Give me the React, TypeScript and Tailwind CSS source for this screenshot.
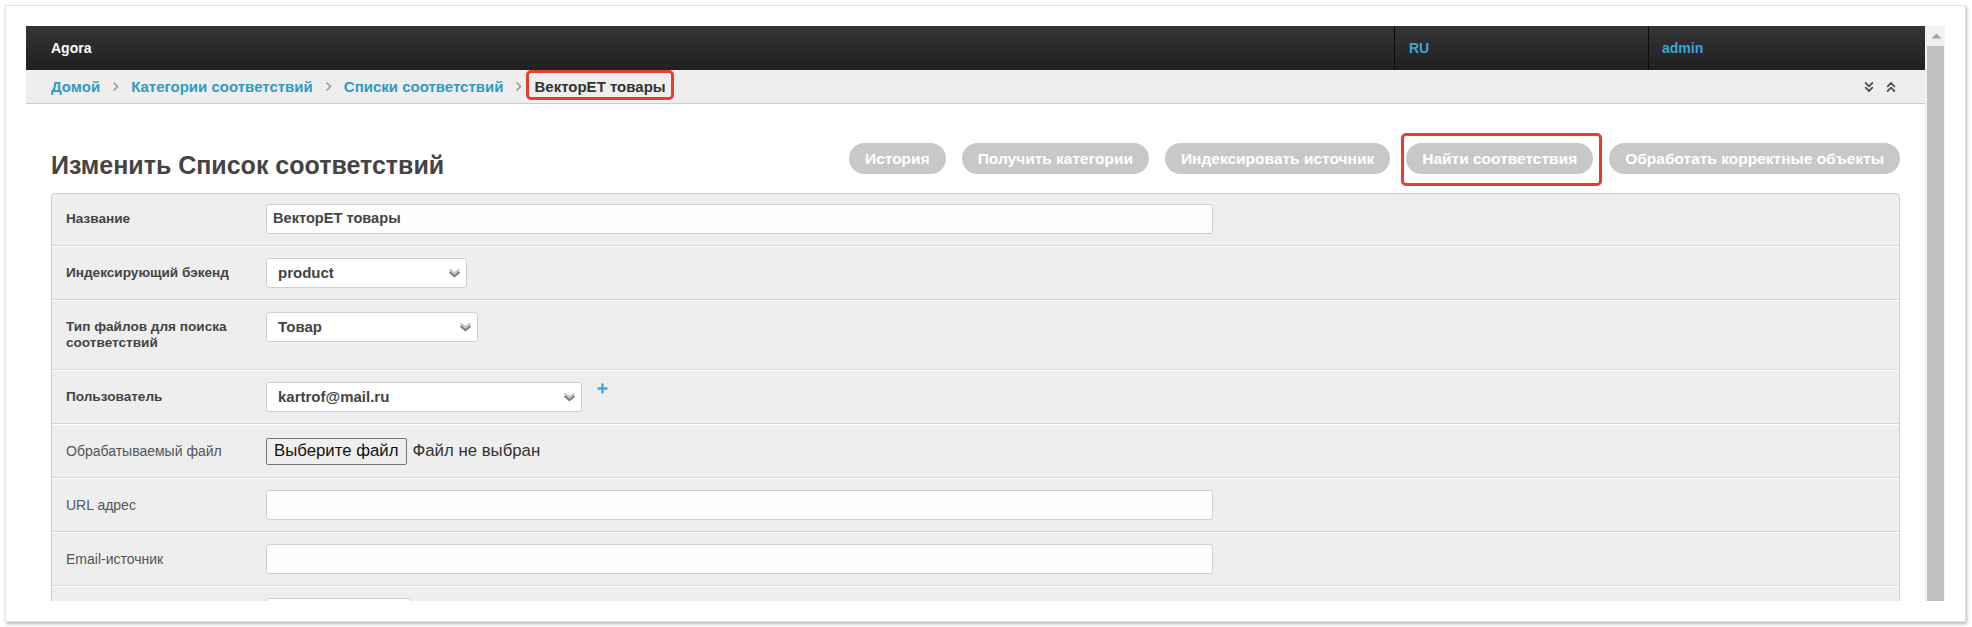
import React from "react";
import { ChevronsDown, ChevronsUp } from "lucide-react";

function Crumb({ children }: { children: React.ReactNode }) {
  return <span className="text-[#309bbf]">{children}</span>;
}

function Sep() {
  return (
    <svg width="7" height="11" viewBox="0 0 7 11" className="mx-[12px]">
      <path d="M1.5 1.5 L5.5 5.5 L1.5 9.5" fill="none" stroke="#9a9a9a" strokeWidth="1.6" />
    </svg>
  );
}

function SelectArrow() {
  return (
    <svg width="15" height="10" viewBox="0 0 15 10">
      <path d="M2.5 1.5 L7.5 5 L12.5 1.5" fill="none" stroke="#c4c4c4" strokeWidth="2" />
      <path d="M2.5 4 L7.5 8 L12.5 4" fill="none" stroke="#7d7d7d" strokeWidth="2.2" />
    </svg>
  );
}

function Select({ value, width }: { value: string; width: string }) {
  return (
    <div
      className={`${width} h-[30px] flex items-center justify-between border border-[#cfcfcf] rounded-[3px] bg-white pl-[11px] pr-[4px] text-[15px] font-bold text-[#444]`}
    >
      <span>{value}</span>
      <SelectArrow />
    </div>
  );
}

function TextInput({ value, width = "w-[947px]" }: { value?: string; width?: string }) {
  return (
    <div
      className={`${width} h-[30px] flex items-center border border-[#cfcfcf] rounded-[3px] bg-[#fdfdfd] pl-[6px] text-[14.6px] font-bold text-[#444]`}
    >
      {value}
    </div>
  );
}

function Row({
  label,
  bold = true,
  first = false,
  children,
}: {
  label: React.ReactNode;
  bold?: boolean;
  first?: boolean;
  children: React.ReactNode;
}) {
  return (
    <div
      className={`flex border-b border-b-[#d6d6d6] ${
        first ? "pt-[10px]" : "border-t border-t-white pt-[11px]"
      } pb-[11px]`}
    >
      <div className="w-[214px] shrink-0 pl-[14px] pr-[24px]">
        <div
          className={`py-[7px] leading-[16px] ${
            bold ? "text-[13.6px] font-bold text-[#444]" : "text-[14px] font-normal text-[#555]"
          }`}
        >
          {label}
        </div>
      </div>
      <div className="flex items-start">{children}</div>
    </div>
  );
}

function ToolButton({ children, marked = false }: { children: React.ReactNode; marked?: boolean }) {
  return (
    <div className="relative">
      <div className="h-[31px] leading-[31px] rounded-full bg-[#c8c8c8] px-[16px] text-[15.5px] font-bold text-white whitespace-nowrap">
        {children}
      </div>
      {marked && (
        <div className="absolute left-[-5px] right-[-9px] top-[-10px] bottom-[-12px] border-[3px] border-[#e53e30] rounded-[5px]" />
      )}
    </div>
  );
}

export default function App() {
  return (
    <div className="w-[1972px] h-[627px] bg-white pl-[5px] pt-[5px] overflow-hidden font-['Liberation_Sans',Arial,sans-serif]">
      <div className="w-[1961px] h-[617px] bg-white border border-[#e2e2e2] shadow-[1px_2px_3px_rgba(0,0,0,0.28)] p-[20px]">
        <div className="w-[1919px] h-[575px] flex overflow-hidden">
          {/* page */}
          <div className="flex-1 min-w-0 flex flex-col bg-white">
            {/* header */}
            <div className="h-[44px] shrink-0 flex bg-gradient-to-b from-[#353535] to-[#202020] text-[14px] font-bold">
              <div className="flex-1 flex items-center pl-[25px] text-white">Agora</div>
              <div className="w-[254px] flex items-center border-l border-l-[#0c0c0c] pl-[14px] text-[#3ea5d6]">
                RU
              </div>
              <div className="w-[277px] flex items-center border-l border-l-[#0c0c0c] pl-[13px] text-[#3ea5d6]">
                admin
              </div>
            </div>
            {/* breadcrumbs */}
            <div className="h-[34px] shrink-0 flex items-center justify-between bg-[#eeeeee] border-b border-b-[#cccccc] pl-[25px] pr-[26px] text-[15px] leading-[17px] font-bold">
              <div className="flex items-center">
                <Crumb>Домой</Crumb>
                <Sep />
                <Crumb>Категории соответствий</Crumb>
                <Sep />
                <Crumb>Списки соответствий</Crumb>
                <Sep />
                <span className="relative text-[#333]">
                  ВекторЕТ товары
                  <span className="absolute left-[-8px] right-[-8px] top-[-8px] bottom-[-5px] border-[3px] border-[#e53e30] rounded-[5px]" />
                </span>
              </div>
              <div className="flex items-center gap-[6px] text-[#555]">
                <ChevronsDown size={16} strokeWidth={2.8} />
                <ChevronsUp size={16} strokeWidth={2.8} />
              </div>
            </div>
            {/* content */}
            <div className="px-[25px]">
              <div className="pt-[39px] flex items-start justify-between">
                <h1 className="mt-[7px] text-[25px] leading-[31px] font-bold text-[#444]">
                  Изменить Список соответствий
                </h1>
                <div className="flex gap-[16px]">
                  <ToolButton>История</ToolButton>
                  <ToolButton>Получить категории</ToolButton>
                  <ToolButton>Индексировать источник</ToolButton>
                  <ToolButton marked>Найти соответствия</ToolButton>
                  <ToolButton>Обработать корректные объекты</ToolButton>
                </div>
              </div>
              <div className="mt-[12px] border border-[#cccccc] rounded-t-[4px] bg-[#eeeeee]">
                <Row label="Название" first>
                  <TextInput value="ВекторЕТ товары" />
                </Row>
                <Row label="Индексирующий бэкенд">
                  <Select value="product" width="w-[201px]" />
                </Row>
                <Row label="Тип файлов для поиска соответствий">
                  <Select value="Товар" width="w-[212px]" />
                </Row>
                <Row label="Пользователь">
                  <Select value="kartrof@mail.ru" width="w-[316px]" />
                  <svg width="11" height="11" viewBox="0 0 11 11" className="ml-[15px] mt-[1px]">
                    <path d="M5.5 0.5 V10.5 M0.5 5.5 H10.5" stroke="#45a8d6" strokeWidth="2.4" />
                  </svg>
                </Row>
                <Row label="Обрабатываемый файл" bold={false}>
                  <div className="flex items-center h-[30px]">
                    <div className="h-[27px] flex items-center px-[7px] border border-[#767676] rounded-[2px] bg-[#efefef] text-[16.8px] text-[#111]">
                      Выберите файл
                    </div>
                    <span className="ml-[6px] text-[16.8px] text-[#333]">Файл не выбран</span>
                  </div>
                </Row>
                <Row label="URL адрес" bold={false}>
                  <TextInput />
                </Row>
                <Row label="Email-источник" bold={false}>
                  <TextInput />
                </Row>
                <Row label="" bold={false}>
                  <TextInput width="w-[146px]" />
                </Row>
              </div>
            </div>
          </div>
          {/* scrollbar */}
          <div className="w-[20px] shrink-0 flex flex-col bg-[#f1f1f1]">
            <div className="h-[20px] flex items-center justify-center pl-[2px]">
              <svg width="11" height="6" viewBox="0 0 11 6">
                <path d="M0.5 5.5 L5.5 0.5 L10.5 5.5 Z" fill="#a3a3a3" />
              </svg>
            </div>
            <div className="ml-[2px] w-[17px] flex-1 bg-[#c1c1c1]" />
          </div>
        </div>
      </div>
    </div>
  );
}
